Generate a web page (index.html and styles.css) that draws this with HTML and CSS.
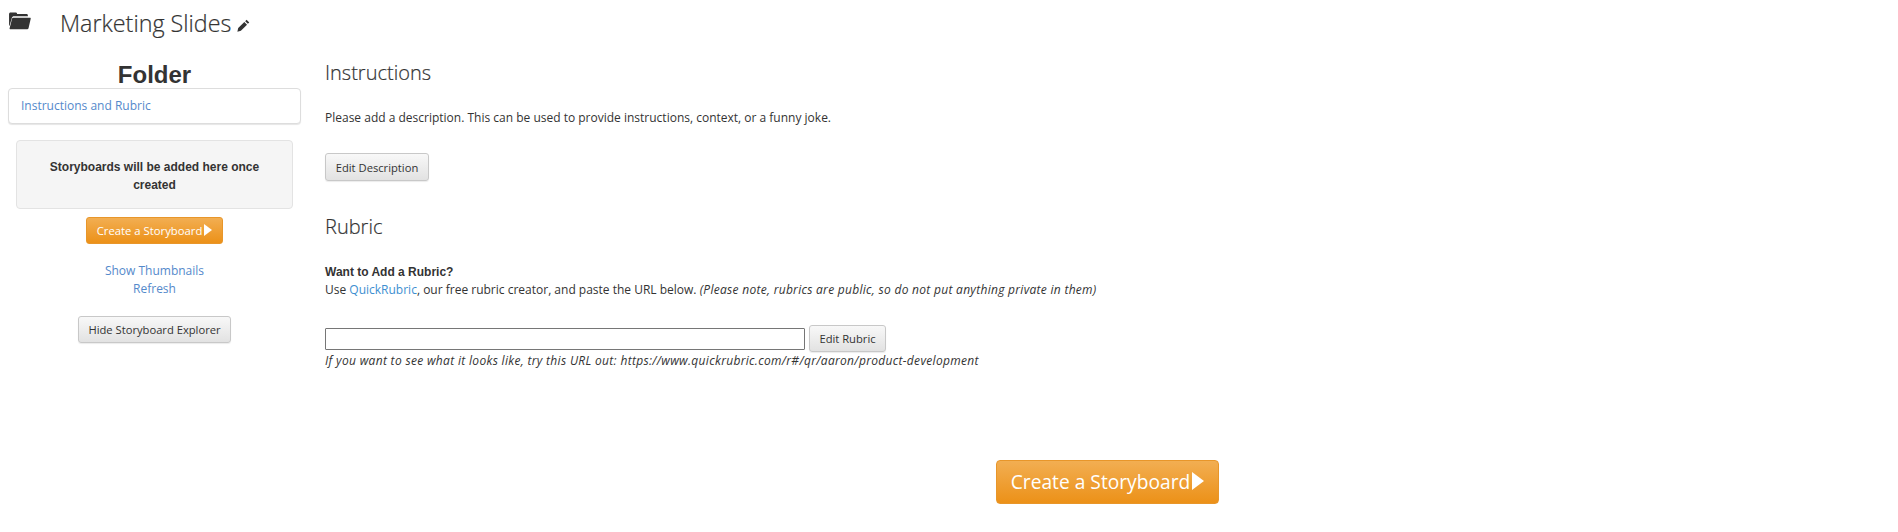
FILE: index.html
```html
<!DOCTYPE html>
<html lang="en">
<head>
<meta charset="utf-8">
<title>Marketing Slides</title>
<link rel="stylesheet" href="styles.css">
</head>
<body>
<header class="top">
  <svg class="folder-icon" viewBox="0 0 24 20" aria-hidden="true"><path d="M1 3.2C1 2.2 1.7 1.5 2.6 1.5h5.6c.6 0 1.1.4 1.2 1v.6h10c.9 0 1.4.6 1.4 1.4v1H6.2C5 5.5 4.3 6 4 7.2L1.5 15.5 1 15.5zM5.5 7h17.4c.7 0 1.1.5.9 1.2l-2.3 10c-.2.7-.7 1.1-1.4 1.1H2.5c-.7 0-1.1-.5-.9-1.2L4.2 8C4.4 7.3 4.8 7 5.5 7z" fill="#333"/></svg>
  <h1 class="title">Marketing Slides</h1>
  <svg class="pencil" viewBox="0 0 14 14" aria-hidden="true"><path d="M10.3.8l2.9 2.9-1.5 1.5-2.9-2.9zM7.9 3.2l2.9 2.9-6.6 6.6L.4 13.6l.9-3.8z" fill="#333"/></svg>
</header>
<div class="layout">
  <aside class="side">
    <h2 class="side-title">Folder</h2>
    <div class="panel"><a class="link" href="#">Instructions and Rubric</a></div>
    <div class="well">Storyboards will be added here once created</div>
    <a class="btn-orange" href="#">Create a Storyboard<span class="arrow"></span></a>
    <div class="side-links">
      <a class="link" href="#">Show Thumbnails</a>
      <a class="link" href="#">Refresh</a>
    </div>
    <button class="btn btn-hide" type="button">Hide Storyboard Explorer</button>
  </aside>
  <main class="main">
    <h3 class="heading">Instructions</h3>
    <p class="desc">Please add a description. This can be used to provide instructions, context, or a funny joke.</p>
    <button class="btn btn-desc" type="button">Edit Description</button>
    <h3 class="heading heading-rubric">Rubric</h3>
    <p class="want">Want to Add a Rubric?</p>
    <p class="use">Use <a class="link-q" href="#">QuickRubric</a>, our free rubric creator, and paste the URL below. <em class="note">(Please note, rubrics are public, so do not put anything private in them)</em></p>
    <div class="url-row">
      <input class="url" type="text">
      <button class="btn btn-rubric" type="button">Edit Rubric</button>
    </div>
    <p class="hint">If you want to see what it looks like, try this URL out: https://www.quickrubric.com/r#/qr/aaron/product-development</p>
    <div class="cta-row">
      <a class="btn-orange btn-large" href="#">Create a Storyboard<span class="arrow"></span></a>
    </div>
  </main>
</div>
</body>
</html>
```
FILE: styles.css
```css
* { box-sizing: border-box; }
html, body { margin: 0; padding: 0; }
body {
  background: #fff;
  color: #333;
  font-family: "Open Sans", sans-serif;
  font-size: 12px;
  line-height: 18px;
  height: 532px;
  overflow: hidden;
}
a { text-decoration: none; }
p { margin: 0; }

.top {
  display: flex;
  align-items: center;
  height: 48px;
  padding-left: 8px;
}
.folder-icon { width: 23px; height: 19px; margin: -8px 29px 0 0; }
.title {
  margin: -2px 0 0;
  font-size: 23.3px;
  font-weight: 300;
  line-height: 48px;
  color: #333;
  -webkit-text-stroke: .2px #333;
}
.pencil { width: 13px; height: 13px; margin: 3px 0 0 6px; }

.layout { display: flex; }
.side { width: 325px; padding-left: 8px; flex: none; }
.side-title {
  margin: 13px 0 0;
  width: 293px;
  font-family: "Liberation Sans", Arial, sans-serif;
  font-size: 24px;
  font-weight: 700;
  line-height: 27px;
  text-align: center;
  color: #333;
}
.panel {
  width: 293px;
  height: 36px;
  padding: 8px 12px;
  border: 1px solid #ddd;
  border-radius: 4px;
  box-shadow: 0 1px 1px rgba(0,0,0,.1);
  background: #fff;
}
.link { color: #5489cb; }
.well {
  width: 277px;
  height: 69px;
  margin: 16px 0 8px 8px;
  padding: 17px 19px;
  border: 1px solid #e3e3e3;
  border-radius: 4px;
  background: #f5f5f5;
  font-family: "Liberation Sans", Arial, sans-serif;
  font-size: 12px;
  font-weight: 700;
  text-align: center;
}
.btn-orange {
  display: flex;
  align-items: center;
  justify-content: center;
  width: 137px;
  height: 27px;
  margin-left: 78px;
  border: 1px solid #e8962a;
  border-radius: 3px;
  background: linear-gradient(#f2ae52, #ec9118);
  color: #fff;
  font-size: 11.3px;
}
.arrow {
  width: 0;
  height: 0;
  margin-left: 2px;
  margin-top: -2px;
  border-style: solid;
  border-width: 6px 0 6px 8px;
  border-color: transparent transparent transparent #fff;
}
.side-links {
  display: flex;
  flex-direction: column;
  align-items: center;
  width: 293px;
  margin: 18px 0 18px;
}
.btn {
  height: 27px;
  padding: 0 10px;
  border: 1px solid #c8c8c8;
  border-radius: 3px;
  background: linear-gradient(#f8f8f8, #e2e2e2);
  box-shadow: 0 1px 1px rgba(0,0,0,.08);
  color: #333;
  font-family: "Open Sans", sans-serif;
  font-size: 11.2px;
}
.btn-hide { display: block; width: 153px; margin-left: 70px; padding: 0; }
.btn-rubric { width: 77px; padding: 0; }

.main { flex: 1; padding-right: 8px; }
.heading {
  margin: 11px 0 0;
  font-size: 20px;
  font-weight: 300;
  line-height: 28px;
  color: #333;
  -webkit-text-stroke: .2px #333;
}
.desc { margin-top: 22px; }
.btn-desc { display: block; width: 104px; height: 28px; padding: 0; margin-top: 26px; }
.heading-rubric { margin-top: 32px; }
.want {
  margin-top: 22px;
  font-family: "Liberation Sans", Arial, sans-serif;
  font-weight: 700;
}
.link-q { color: #3d8fd1; }
.note { letter-spacing: .29px; }
.url-row { display: flex; align-items: center; gap: 4px; margin-top: 26px; }
.url { width: 480px; height: 22px; margin: 0; border: 1px solid #767676; border-radius: 1px; background: #fff; }
.hint { font-style: italic; letter-spacing: .32px; }
.cta-row { display: flex; justify-content: center; margin-top: 90px; }
.btn-large {
  width: 223px;
  height: 44px;
  margin: 0;
  border-radius: 4px;
  font-size: 19.2px;
}
.btn-large .arrow { border-width: 9px 0 9px 12px; margin-left: 2px; }
```
